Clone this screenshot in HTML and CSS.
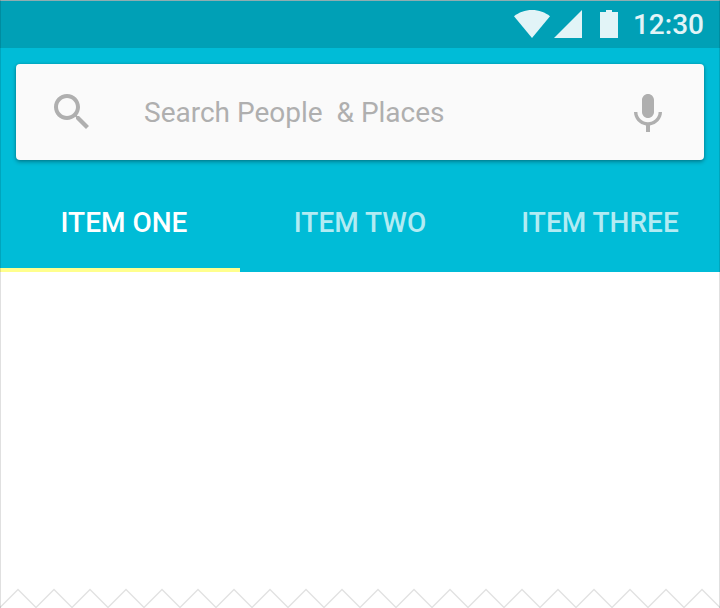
FILE: index.html
```html
<!DOCTYPE html>
<html lang="en">
<head>
<meta charset="utf-8">
<title>Search</title>
<link rel="stylesheet" href="styles.css">
</head>
<body>
<div class="screen">
  <header class="app-bar">
    <div class="status-bar">
      <svg class="wifi" viewBox="0 0 36 28"><path d="M0 6.2C4.8 2.4 11 0 18 0s13.200 2.400 18 6.200L18 28z"/></svg>
      <svg class="signal" viewBox="0 0 28 28"><path d="M28 0v28H0z"/></svg>
      <svg class="battery" viewBox="0 0 18 28"><path d="M6 0h6v2h6v26H0V2h6z"/></svg>
      <span class="clock">12:30</span>
    </div>
    <div class="search-box">
      <svg class="search-icon" viewBox="0 0 24 24"><path d="M15.500 14h-.79l-.28-.27C15.410 12.590 16 11.110 16 9.500 16 5.910 13.090 3 9.500 3S3 5.910 3 9.500 5.910 16 9.500 16c1.610 0 3.090-.59 4.230-1.570l.27.28v.79l5 4.990L20.490 19l-4.990-5zm-6 0C7.010 14 5 11.990 5 9.500S7.010 5 9.500 5 14 7.010 14 9.500 11.990 14 9.500 14z"/></svg>
      <span class="hint">Search People &nbsp;&amp; Places</span>
      <svg class="mic-icon" viewBox="0 0 24 24"><path d="M12 14c1.660 0 3-1.340 3-3V5c0-1.660-1.340-3-3-3S9 3.340 9 5v6c0 1.660 1.340 3 3 3zm5.300-3c0 3-2.540 5.100-5.300 5.100S6.700 14 6.700 11H5c0 3.410 2.720 6.230 6 6.720V21h2v-3.280c3.280-.48 6-3.300 6-6.720h-1.700z"/></svg>
    </div>
    <nav class="tabs">
      <div class="tab active"><span>ITEM ONE</span></div>
      <div class="tab"><span>ITEM TWO</span></div>
      <div class="tab"><span>ITEM THREE</span></div>
    </nav>
  </header>
  <main class="content"></main>
  <svg class="torn-edge" viewBox="0 0 720 20">
    <defs><pattern id="zig" width="36" height="20" patternUnits="userSpaceOnUse"><path d="M-1 20.500L18 1.500L37 20.500"/></pattern></defs>
    <rect width="720" height="20" fill="url(#zig)"/>
  </svg>
</div>
</body>
</html>
```
FILE: styles.css
```css
body {
  margin: 0;
  background: #fff;
  font-family: Roboto, sans-serif;
}

.screen {
  position: relative;
  display: flex;
  flex-direction: column;
  width: 720px;
  height: 608px;
  overflow: hidden;
}

.screen::after {
  content: "";
  position: absolute;
  inset: 0;
  border: solid rgba(0, 0, 0, 0.12);
  border-width: 0 1px;
  pointer-events: none;
}

.app-bar {
  height: 272px;
  background: #00bcd7;
}

.status-bar {
  display: flex;
  align-items: center;
  box-sizing: border-box;
  height: 48px;
  padding-right: 16px;
  justify-content: flex-end;
  background: #00a0b6;
  box-shadow: inset 0 1px #8fadb1;
  fill: #e2f4f7;
  color: #e2f4f7;
}

.wifi { width: 36px; height: 28px; margin-right: 4px; }
.signal { width: 28px; height: 28px; margin-right: 18px; }
.battery { width: 18px; height: 28px; margin-right: 15px; }

.clock {
  padding-top: 2px;
  font-size: 28px;
  font-weight: 500;
  line-height: 46px;
}

.search-box {
  display: flex;
  align-items: center;
  box-sizing: border-box;
  height: 96px;
  margin: 16px 16px 0;
  padding: 0 32px;
  border-radius: 4px;
  background: #fafafa;
  box-shadow: 0 2px 4px rgba(0, 0, 0, 0.3), 0 0 3px rgba(0, 0, 0, 0.16);
  fill: #afafaf;
}

.search-icon { width: 48px; height: 48px; }
.mic-icon { width: 48px; height: 48px; margin-top: 4px; }

.hint {
  flex: 1;
  margin-left: 48px;
  padding-top: 2px;
  color: #afafaf;
  font-size: 28px;
  line-height: 48px;
}

.tabs {
  display: grid;
  grid-template-columns: repeat(3, 1fr);
  height: 112px;
}

.tab {
  display: flex;
  justify-content: center;
  box-sizing: border-box;
  padding-top: 39px;
  color: #b2ebf3;
  font-size: 28px;
  font-weight: 500;
  line-height: 48px;
  white-space: nowrap;
}

.active {
  padding-left: 8px;
  border-bottom: 4px solid #ffff8d;
  color: #fff;
}

.content { flex: 1; }

.torn-edge {
  width: 720px;
  height: 20px;
}

.torn-edge path {
  fill: none;
  stroke: #e2e2e2;
  stroke-width: 1.4;
}
```
